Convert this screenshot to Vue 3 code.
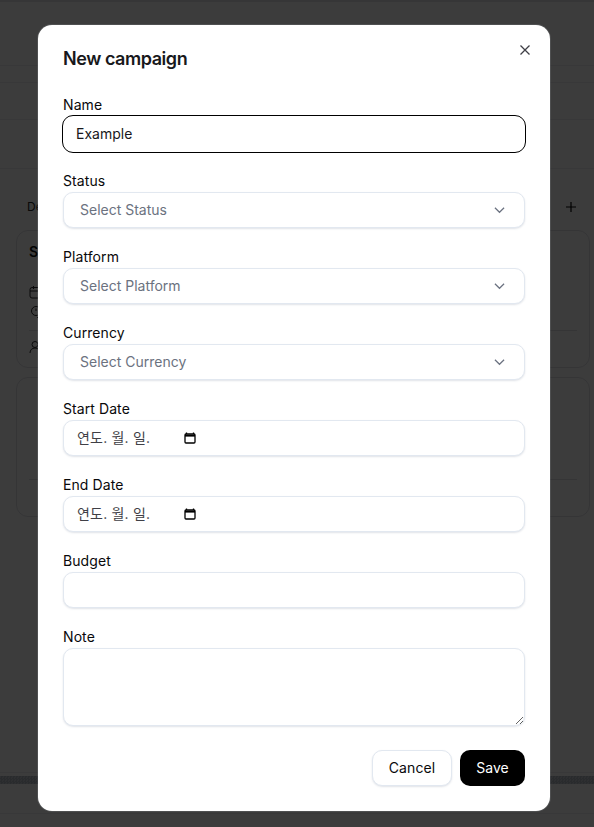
<script setup>
const selects = [
  { label: 'Status', placeholder: 'Select Status' },
  { label: 'Platform', placeholder: 'Select Platform' },
  { label: 'Currency', placeholder: 'Select Currency' },
]
const dates = ['Start Date', 'End Date']
</script>

<template>
  <div class="page">
    <div class="topbar"></div>
    <div class="band b1"></div>
    <div class="band b2"></div>
    <div class="band b3"></div>
    <div class="band b4"></div>
    <main class="board">
      <div class="board-head">
        <span class="board-title">De</span>
        <svg class="plus" viewBox="0 0 12 12" width="12" height="12"><path d="M6 1v10M1 6h10" /></svg>
      </div>
      <article class="card first">
        <div class="card-title">S</div>
        <div class="meta">
          <svg viewBox="0 0 14 14" width="14" height="14"><rect x="1" y="2.5" width="12" height="10.5" rx="2" /><path d="M1 6h12M4.5 1v3M9.5 1v3" /></svg>
        </div>
        <div class="meta">
          <svg viewBox="0 0 14 14" width="14" height="14"><circle cx="7" cy="6" r="4.5" /><path d="M7 3.5V6M8 12.5c2 0 3 .5 4 1" /></svg>
        </div>
        <div class="card-foot">
          <svg viewBox="0 0 14 14" width="14" height="14"><circle cx="6" cy="4.5" r="3" /><path d="M1 13c0-3 2-5 5-5s5 2 5 5M10 1.8a3 3 0 0 1 0 5.4" /></svg>
        </div>
      </article>
      <article class="card second">
        <div class="card-foot"></div>
      </article>
    </main>
    <div class="strip"></div>
    <div class="band b5"></div>
    <div class="band b6"></div>

    <div class="overlay">
      <section class="dialog">
        <button class="close" aria-label="Close">
          <svg viewBox="0 0 12 12" width="12" height="12"><path d="M1.5 1.5l9 9M10.5 1.5l-9 9" /></svg>
        </button>
        <h2>New campaign</h2>
        <form class="form" @submit.prevent>
          <div class="field">
            <label>Name</label>
            <input class="control name" type="text" value="Example" />
          </div>
          <div v-for="s in selects" :key="s.label" class="field">
            <label>{{ s.label }}</label>
            <button type="button" class="control select">
              <span>{{ s.placeholder }}</span>
              <svg viewBox="0 0 12 8" width="12" height="8"><path d="M1 1.5l5 5 5-5" /></svg>
            </button>
          </div>
          <div v-for="d in dates" :key="d" class="field">
            <label>{{ d }}</label>
            <div class="control date">
              <span class="date-text">연도. 월. 일.</span>
              <svg viewBox="0 0 12 12" width="12" height="12"><path d="M2.5 0.5v1.5M9.5 0.5v1.5" class="tick" /><rect x="1" y="2" width="10" height="9" rx="1" /><path d="M1 3.6h10" class="bar" /></svg>
            </div>
          </div>
          <div class="field">
            <label>Budget</label>
            <input class="control" type="text" />
          </div>
          <div class="field">
            <label>Note</label>
            <textarea class="control note"></textarea>
          </div>
          <div class="actions">
            <button type="button" class="btn cancel">Cancel</button>
            <button type="submit" class="btn save">Save</button>
          </div>
        </form>
      </section>
    </div>
  </div>
</template>

<style>
html, body { margin: 0; background: #3c3c3c; }
</style>

<style scoped>
* { box-sizing: border-box; }
.page {
  width: 594px;
  height: 827px;
  overflow: hidden;
  position: relative;
  background: #fff;
  font-family: Inter, "Noto Sans CJK KR", sans-serif;
  color: #0a0a0a;
}
.topbar { height: 2px; background: #e4e4e7; }
.band { border-bottom: 1px solid #eeeef1; }
.b1 { height: 64px; }
.b2 { height: 17px; }
.b3 { height: 37px; }
.b4 { height: 49px; }
.board { height: 604px; padding: 0 4px 0 16px; border-bottom: 1px solid #eeeef1; }
.board-head {
  height: 61px;
  padding: 14px 13px 0 11px;
  display: flex;
  align-items: center;
  justify-content: space-between;
}
.board-title { font-size: 12px; color: #27272a; }
.plus path { stroke: #000; fill: none; stroke-width: 1.2; }
.card {
  border: 1px solid #e0e0e6;
  border-radius: 12px;
  padding: 11px 12px;
}
.card svg { fill: none; stroke: #27272a; stroke-width: 1; display: block; }
.first { height: 138px; margin-bottom: 9px; }
.second { height: 140px; padding-top: 93px; }
.card-title { font-size: 14px; font-weight: 600; line-height: 20px; margin-bottom: 20px; }
.meta { height: 20px; display: flex; align-items: center; }
.card-foot { border-top: 1px solid #e0e0e6; margin-top: 8px; padding-top: 9px; }
.strip {
  height: 11px;
  padding: 0;
  background:
    linear-gradient(#fff, #fff) top / 100% 3px no-repeat,
    repeating-conic-gradient(#aeb6bd 0 25%, #c2c8ce 0 50%) 0 0 / 3px 3px;
}
.b5 { height: 30px; }
.b6 { height: 10px; border: 0; }

.overlay {
  position: absolute;
  inset: 0;
  background: rgba(0, 0, 0, 0.765);
  display: flex;
  justify-content: center;
  align-items: flex-start;
  padding: 25px 6px 0 0;
}
.dialog {
  position: relative;
  width: 512px;
  height: 786px;
  padding: 24px 25px;
  background: #fff;
  border-radius: 14px;
  box-shadow: 0 0 0 1px rgba(226, 232, 240, 0.12);
}
h2 {
  margin: 0;
  font-size: 18px;
  line-height: 20px;
  font-weight: 600;
  letter-spacing: -0.45px;
  color: #18181b;
}
.close {
  position: absolute;
  top: 19px;
  right: 19px;
  width: 12px;
  height: 12px;
  padding: 0;
  border: 0;
  background: none;
  display: block;
}
.close svg { display: block; fill: none; stroke: #3f3f46; stroke-width: 1.3; }
.form { margin-top: 27px; display: flex; flex-direction: column; gap: 20px; }
.field { display: flex; flex-direction: column; }
label {
  font-size: 14px;
  font-weight: 400;
  letter-spacing: 0.08px;
  line-height: 18px;
  padding-bottom: 2px;
  color: #09090b;
}
.control {
  width: 100%;
  height: 36px;
  border: 1px solid #e2e8f0;
  border-radius: 10px;
  background: #fff;
  box-shadow: 0 1px 2px rgba(100, 116, 139, 0.2);
  font: 400 14px/20px Inter, "Noto Sans CJK KR", sans-serif;
  color: #18181b;
  outline: none;
}
input.control { padding: 0 12px 1px; }
.name { outline: 1px solid #000; border-color: #fff; box-shadow: none; }
.select {
  display: flex;
  align-items: center;
  justify-content: space-between;
  padding: 0 19px 0 16px;
  color: #6b7280;
  text-align: left;
}
.select svg { fill: none; stroke: #6b7280; stroke-width: 1.3; width: 11px; }
.date {
  display: flex;
  align-items: center;
  padding: 0 12px 0 13px;
  gap: 34px;
  color: #3f3f46;
}
.date-text { width: 73px; white-space: nowrap; letter-spacing: 0.2px; }
.date svg { fill: none; stroke: #000; stroke-width: 1.3; flex: none; }
.date .tick { stroke-width: 1.3; }
.date .bar { stroke-width: 2; }
.note {
  display: block;
  height: 78px;
  padding: 8px 12px;
  resize: vertical;
}
.actions { display: flex; justify-content: flex-end; gap: 8px; margin-top: 4px; }
.btn {
  height: 36px;
  border-radius: 10px;
  font: 400 14px/20px Inter, sans-serif;
  letter-spacing: 0.08px;
  padding: 0;
}
.cancel {
  width: 80px;
  background: #fff;
  color: #09090b;
  border: 1px solid #e2e8f0;
  box-shadow: 0 1px 2px rgba(100, 116, 139, 0.2);
}
.save { width: 65px; background: #000; color: #fff; border: 0; }
</style>
